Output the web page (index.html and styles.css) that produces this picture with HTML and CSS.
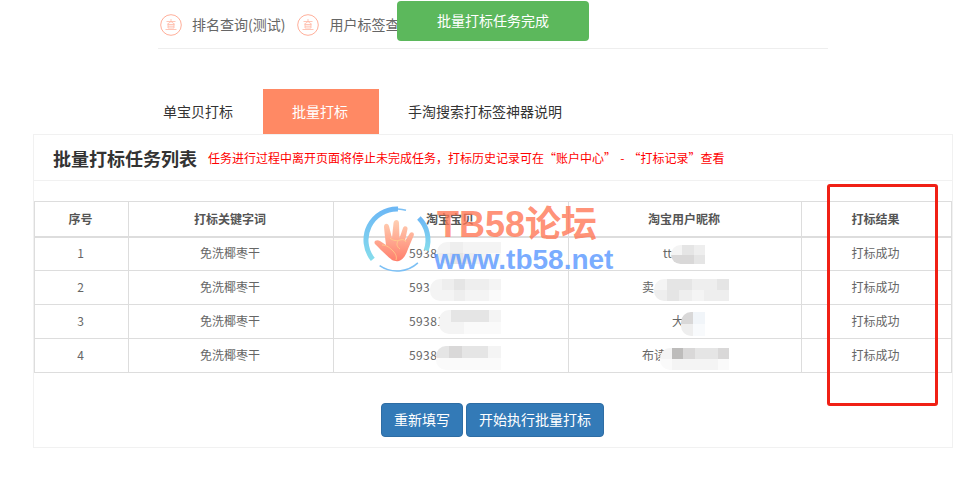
FILE: index.html
```html
<!DOCTYPE html>
<html lang="zh-CN">
<head>
    <meta charset="UTF-8">
    <meta name="viewport" content="width=device-width, initial-scale=1.0">
    <title>批量打标</title>
    <link rel="stylesheet" href="styles.css">
</head>
<body>
    <nav class="top-nav">
        <a class="nav-item">
            <svg class="nav-icon" viewBox="0 0 22 22"><circle cx="11" cy="11" r="10.3"/><path class="glyph" d="M6.5 7.5h9M11 5v2.5M11 7.5 7 10.5M11 7.5l4 3M8 10.5h6v3.5H8zM8 12.2h6M5.5 15.5h11"/></svg>
            <span>排名查询(测试)</span>
        </a>
        <a class="nav-item">
            <svg class="nav-icon" viewBox="0 0 22 22"><circle cx="11" cy="11" r="10.3"/><path class="glyph" d="M6.5 7.5h9M11 5v2.5M11 7.5 7 10.5M11 7.5l4 3M8 10.5h6v3.5H8zM8 12.2h6M5.5 15.5h11"/></svg>
            <span>用户标签查询</span>
        </a>
    </nav>

    <ul class="tabs">
        <li>单宝贝打标</li>
        <li class="active">批量打标</li>
        <li>手淘搜索打标签神器说明</li>
    </ul>

    <section class="panel">
        <div class="panel-head">
            <h2>批量打标任务列表</h2>
            <span class="notice">任务进行过程中离开页面将停止未完成任务，打标历史记录可在“账户中心” - “打标记录”查看</span>
        </div>
        <table class="task-table">
            <thead>
                <tr><th class="col-no">序号</th><th class="col-key">打标关键字词</th><th class="col-item">淘宝宝贝</th><th class="col-user">淘宝用户昵称</th><th>打标结果</th></tr>
            </thead>
            <tbody>
                <tr><td>1</td><td>免洗椰枣干</td><td><span class="masked w82">5938</span></td><td><span class="masked w42">tt</span></td><td>打标成功</td></tr>
                <tr><td>2</td><td>免洗椰枣干</td><td><span class="masked w82">593</span></td><td><span class="masked w84">卖</span></td><td>打标成功</td></tr>
                <tr><td>3</td><td>免洗椰枣干</td><td><span class="masked w82">59381</span></td><td><span class="masked w24">大</span></td><td>打标成功</td></tr>
                <tr><td>4</td><td>免洗椰枣干</td><td><span class="masked w82">5938</span></td><td><span class="masked w84">布读</span></td><td>打标成功</td></tr>
            </tbody>
        </table>
        <div class="actions">
            <button class="btn">重新填写</button>
            <button class="btn">开始执行批量打标</button>
        </div>
    </section>

    <!-- 打码 -->
    <div class="mosaic m-a">
        <i class="t1"></i><i class="t2"></i><i class="t1"></i><i class="t1"></i><i class="t1"></i>
        <i class="t2"></i><i class="t3"></i><i class="t2"></i><i class="t1"></i><i class="t0"></i>
    </div>
    <div class="mosaic m-b">
        <i class="t1"></i><i class="t2"></i><i class="t3"></i><i class="t2"></i><i class="t2"></i><i class="t1"></i>
        <i class="t1"></i><i class="t1"></i><i class="t2"></i><i class="t1"></i><i class="t1"></i><i class="t0"></i>
    </div>
    <div class="mosaic m-c">
        <i class="t1"></i><i class="t3"></i><i class="t3"></i><i class="t3"></i><i class="t1"></i>
        <i class="t1"></i><i class="t1"></i><i class="t0"></i><i class="t0"></i><i class="t0"></i>
    </div>
    <div class="mosaic m-d">
        <i class="t3"></i><i class="t4"></i><i class="t3"></i><i class="t3"></i><i class="t1"></i>
        <i class="t0"></i><i class="t0"></i><i class="t0"></i><i class="t0"></i><i class="t0"></i>
    </div>
    <div class="mosaic m-e">
        <i class="t1"></i><i class="t3"></i><i class="t2"></i>
        <i class="t4"></i><i class="t4"></i><i class="t3"></i>
    </div>
    <div class="mosaic m-f">
        <i class="t1"></i><i class="t3"></i><i class="t3"></i><i class="t2"></i><i class="t2"></i><i class="t3"></i>
        <i class="t2"></i><i class="t3"></i><i class="t2"></i><i class="t1"></i><i class="t2"></i><i class="t2"></i>
    </div>
    <div class="mosaic m-g">
        <i class="t4"></i><i class="b1"></i>
        <i class="t2"></i><i class="b2"></i>
    </div>
    <div class="mosaic m-h">
        <i class="t1"></i><i class="t5"></i><i class="t4"></i><i class="t3"></i><i class="t3"></i><i class="t4"></i>
        <i class="t0"></i><i class="t1"></i><i class="t1"></i><i class="t1"></i><i class="t1"></i><i class="t0"></i>
    </div>

    <!-- 水印 -->
    <div class="watermark">
        <svg class="wm-logo" viewBox="0 0 70 70">
            <defs>
                <linearGradient id="ring" x1="0" y1="0" x2="0" y2="1">
                    <stop offset="0" stop-color="#6db8f5"/>
                    <stop offset="1" stop-color="#85dcec"/>
                </linearGradient>
                <linearGradient id="hand" x1="0" y1="0" x2="0" y2="1">
                    <stop offset="0" stop-color="#ffd0b4"/>
                    <stop offset="1" stop-color="#ff7f6c"/>
                </linearGradient>
            </defs>
            <path class="ring-thick" d="M10.8 54.4A31 31 0 0 1 36 4"/>
            <path class="ring-thin" d="M36 4A31 31 0 0 1 44 5.3"/>
            <path class="ring-thick" d="M56.9 13.1A31 31 0 0 1 64.2 45.4"/>
            <path class="ring-thin" d="M17.6 60.7A31 31 0 0 0 55.9 57.9"/>
            <path class="palm" d="M30 55C26 52 18 44 13 39 11 36 15 34 18 36L24 40 23 32 22 22C22 18 26 18 27 21L30 33 31.5 18C32 14 37 14 37 18L37.5 33 41 23C42 20 46 21 45.5 24L43 36 48 28C50 26 53 28 51.5 31L46 44C44 50 41 55 37 56 34 56.5 32 56 30 55Z"/>
            <path class="palm-line" d="M20 40c5 0 8 3 11 6 3 3 4 6 3 9M28 33c3 3 7 3 10 2 3-1 5 0 6 2M36 36c-2 3-1 6 2 8"/>
        </svg>
        <div class="wm-text">
            <div class="wm-title">TB58论坛</div>
            <div class="wm-url">www.tb58.net</div>
        </div>
    </div>

    <div class="result-mark"></div>
    <div class="toast">批量打标任务完成</div>
</body>
</html>
```

FILE: styles.css
```css
* {
    box-sizing: border-box;
}
html, body {
    margin: 0;
    padding: 0;
}
body {
    position: relative;
    height: 480px;
    overflow: hidden;
    background-color: #fff;
    font-family: "Noto Sans CJK SC", "Liberation Sans", sans-serif;
    font-size: 14px;
    color: #666;
}

/* 顶部导航 */
.top-nav {
    display: flex;
    width: 670px;
    height: 49px;
    margin-left: 158px;
    padding: 14px 0 0 2px;
    border-bottom: 1px solid #eee;
    overflow: hidden;
}
.nav-item {
    display: flex;
    align-items: flex-start;
    margin-right: 12px;
    line-height: 20px;
    white-space: nowrap;
}
.nav-item span {
    margin-left: 10px;
}
.nav-icon {
    width: 22px;
    height: 22px;
    flex: none;
    fill: none;
    stroke: #ff9a80;
    stroke-width: 0.8;
}
.nav-icon .glyph {
    stroke: #ffb8a4;
}

/* 标签页 */
.tabs {
    display: flex;
    list-style: none;
    height: 45px;
    margin: 40px 0 0 133px;
    padding: 0;
}
.tabs li {
    padding: 0 30px;
    line-height: 45px;
    color: #333;
}
.tabs li + li {
    padding: 0 31px 0 29px;
}
.tabs li.active {
    background-color: #ff8964;
    color: #fff;
}

/* 面板 */
.panel {
    width: 920px;
    height: 314px;
    margin-left: 33px;
    border: 1px solid #f1f1f1;
    background-color: #fff;
}
.panel-head {
    display: flex;
    align-items: center;
    height: 46px;
    padding-left: 19px;
    border-bottom: 1px solid #f1f1f1;
}
.panel-head h2 {
    margin: 0;
    font-size: 18px;
    font-weight: bold;
    color: #333;
}
.notice {
    margin-left: 11px;
    font-size: 12px;
    word-spacing: 1.5px;
    color: #f00;
    white-space: nowrap;
}

/* 表格 */
.task-table {
    width: 918px;
    margin-top: 20px;
    border-collapse: collapse;
    table-layout: fixed;
    font-size: 12px;
    text-align: center;
}
.task-table th, .task-table td {
    height: 34px;
    padding: 0 2px 2px 0;
    border: 1px solid #ddd;
}
.task-table th {
    height: 35px;
    padding-bottom: 0;
    border-bottom: 2px solid #ddd;
    font-weight: bold;
    color: #555;
}
.col-no { width: 94px; }
.col-key { width: 205px; }
.col-item { width: 235px; }
.col-user { width: 233px; }

/* 打码前的文字，宽度按原内容留 */
.masked {
    display: inline-block;
    text-align: left;
}
.w82 { width: 82px; letter-spacing: 0.4px; }
.w42 { width: 42px; }
.w84 { width: 84px; }
.w24 { width: 24px; }

.actions {
    display: flex;
    justify-content: center;
    gap: 3px;
    margin-top: 30px;
    padding-right: 1px;
}
.btn {
    height: 34px;
    padding: 0 12px 2px;
    border: 1px solid #2e6da4;
    border-radius: 4px;
    background-color: #337ab7;
    color: #fff;
    font-family: inherit;
    font-size: 14px;
}

/* 打码色块 */
.mosaic {
    position: absolute;
    display: grid;
    grid-auto-rows: 1fr;
    overflow: hidden;
    border-radius: 10px 0 0 10px;
}
.mosaic i { display: block; }
.m-a { left: 437px; top: 242px; width: 64px; height: 22px; grid-template-columns: repeat(5, 1fr); }
.m-b { left: 430px; top: 279px; width: 71px; height: 22px; grid-template-columns: repeat(6, 1fr); }
.m-c { left: 439px; top: 310px; width: 62px; height: 24px; grid-template-columns: repeat(5, 1fr); }
.m-d { left: 436px; top: 346px; width: 65px; height: 24px; grid-template-columns: repeat(5, 1fr); }
.m-e { left: 671px; top: 245px; width: 34px; height: 19px; grid-template-columns: repeat(3, 1fr); }
.m-f { left: 654px; top: 279px; width: 75px; height: 22px; grid-template-columns: repeat(6, 1fr); }
.m-g { left: 681px; top: 312px; width: 24px; height: 24px; grid-template-columns: repeat(2, 1fr); }
.m-h { left: 660px; top: 348px; width: 69px; height: 22px; grid-template-columns: repeat(6, 1fr); }
.t0 { background-color: #fafafa; }
.t1 { background-color: #f4f4f4; }
.t2 { background-color: #eeeeee; }
.t3 { background-color: #e5e5e5; }
.t4 { background-color: #d9d8d8; }
.t5 { background-color: #bdbcbb; }
.b1 { background-color: #f1f5f9; }
.b2 { background-color: #f8fafc; }

/* 水印 */
.watermark {
    position: absolute;
    left: 362px;
    top: 205px;
    display: flex;
    pointer-events: none;
}
.wm-logo {
    width: 70px;
    height: 70px;
    flex: none;
}
.ring-thick {
    fill: none;
    stroke: url(#ring);
    stroke-width: 5;
}
.ring-thin {
    fill: none;
    stroke: #7cc0f5;
    stroke-width: 1.5;
}
.palm {
    fill: url(#hand);
}
.palm-line {
    fill: none;
    stroke: #ffd08a;
    stroke-width: 0.8;
}
.wm-text {
    margin-left: 2px;
}
.wm-title {
    margin-left: 3px;
    font-size: 36px;
    line-height: 40px;
    font-weight: bold;
    font-family: "Liberation Sans", "Noto Sans CJK SC", sans-serif;
    color: rgba(255, 118, 84, 0.8);
    white-space: nowrap;
}
.wm-url {
    margin-top: 1px;
    font-size: 28px;
    line-height: 28px;
    font-weight: bold;
    font-family: "Liberation Sans", sans-serif;
    color: rgba(86, 150, 255, 0.8);
    white-space: nowrap;
}

/* 红框 */
.result-mark {
    position: absolute;
    left: 827px;
    top: 184px;
    width: 111px;
    height: 222px;
    border: 3px solid #f02015;
    border-radius: 3px;
}

/* 提示 */
.toast {
    position: absolute;
    left: 397px;
    top: 1px;
    width: 192px;
    height: 40px;
    border-radius: 4px;
    background-color: #5cb85c;
    color: #fff;
    font-size: 14px;
    line-height: 38px;
    text-align: center;
}
```
